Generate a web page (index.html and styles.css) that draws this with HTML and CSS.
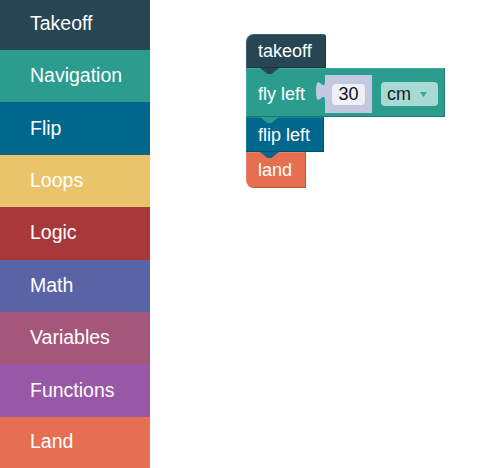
FILE: index.html
```html
<!DOCTYPE html>
<html>
<head>
<meta charset="utf-8">
<link rel="stylesheet" href="styles.css">
</head>
<body>
<div class="app">
  <nav class="toolbox">
    <div class="cat cat-first c-takeoff">Takeoff</div>
    <div class="cat c-nav">Navigation</div>
    <div class="cat c-flip">Flip</div>
    <div class="cat c-loops">Loops</div>
    <div class="cat c-logic">Logic</div>
    <div class="cat c-math">Math</div>
    <div class="cat c-vars">Variables</div>
    <div class="cat c-funcs">Functions</div>
    <div class="cat c-land">Land</div>
  </nav>
  <main class="workspace">
    <div class="stack">
      <div class="block b-takeoff hat">
        <span class="label">takeoff</span>
        <span class="tab"></span>
      </div>
      <div class="block b-fly">
        <span class="label">fly left</span>
        <div class="slot">
          <svg class="slot-bg" width="57" height="38" viewBox="0 0 57 38">
            <path d="M10,0 H57 V38 H10 V26 c0,-13.3 -9,10.7 -9,-10 s9,3.3 9,-10 Z" fill="#c4c7e0"/>
          </svg>
          <span class="num">30</span>
        </div>
        <div class="dropdown">
          <span class="dd-text">cm</span>
          <svg class="dd-arrow" width="7" height="5" viewBox="0 0 7 5"><path d="M0,0 H7 L3.5,5 Z" fill="#3aa597"/></svg>
        </div>
        <span class="tab"></span>
      </div>
      <div class="block b-flip">
        <span class="label">flip left</span>
        <span class="tab"></span>
      </div>
      <div class="block b-land foot">
        <span class="label">land</span>
      </div>
    </div>
  </main>
</div>
</body>
</html>
```

FILE: styles.css
```css
html, body {
  margin: 0;
  padding: 0;
  background: #ffffff;
}

body {
  font-family: "Liberation Sans", Arial, sans-serif;
  width: 483px;
  height: 468px;
  overflow: hidden;
}

.app {
  display: flex;
  height: 468px;
}

.toolbox {
  width: 150px;
  flex: none;
  display: flex;
  flex-direction: column;
}

.cat {
  height: 52.4px;
  flex: none;
  box-sizing: border-box;
  padding: 0 0 1px 30px;
  display: flex;
  align-items: center;
  color: #ffffff;
  font-size: 19.5px;
}

.cat-first {
  height: 50px;
  padding-bottom: 4px;
}

.c-takeoff { background: #264653; }
.c-nav { background: #2a9d8f; }
.c-flip { background: #00688c; }
.c-loops { background: #e9c46a; }
.c-logic { background: #a8393a; }
.c-math { background: #5a63a6; }
.c-vars { background: #a5577a; }
.c-funcs { background: #9858a6; }
.c-land { background: #e76f51; flex: 1; }

.workspace {
  flex: 1;
  padding: 34px 0 0 96px;
}

.stack {
  display: flex;
  flex-direction: column;
  align-items: flex-start;
}

.block {
  position: relative;
  display: flex;
  align-items: center;
  box-sizing: border-box;
  padding: 0 14px 0 12px;
  color: #ffffff;
  font-size: 18px;
  box-shadow: inset -1px -1px 0 rgba(0, 0, 0, 0.22), inset 1px 1px 0 rgba(255, 255, 255, 0.12);
}

.label {
  white-space: nowrap;
}

.tab {
  position: absolute;
  left: 14px;
  top: 100%;
  width: 19px;
  height: 6px;
  background: inherit;
  clip-path: polygon(0 0, 100% 0, 60% 100%, 40% 100%);
  z-index: 2;
}

.hat {
  border-top-left-radius: 8px;
  border-top-right-radius: 3px;
}

.foot {
  border-bottom-left-radius: 8px;
}

.b-takeoff {
  background: #264653;
  height: 34px;
  padding-top: 1px;
}

.b-fly {
  background: #2a9d8f;
  height: 49px;
  padding-top: 3px;
  padding-right: 7px;
}

.b-flip {
  background: #00688c;
  height: 35px;
  padding-top: 2px;
}

.b-land {
  background: #e76f51;
  height: 36px;
  padding-top: 1px;
}

.slot {
  position: relative;
  width: 57px;
  height: 38px;
  margin-left: 10px;
  box-sizing: border-box;
  padding-left: 17px;
  display: flex;
  align-items: center;
  flex: none;
}

.slot-bg {
  position: absolute;
  left: 0;
  top: 0;
}

.num {
  position: relative;
  width: 33px;
  height: 21px;
  border-radius: 4px;
  background: #eff0f6;
  color: #111111;
  display: flex;
  align-items: center;
  justify-content: center;
  font-size: 18px;
  margin-top: 1px;
}

.dropdown {
  margin-left: 9px;
  width: 57px;
  height: 24px;
  border-radius: 4px;
  background: #a6dad3;
  display: flex;
  align-items: center;
  box-sizing: border-box;
  padding: 0 11px 0 6px;
  flex: none;
}

.dd-text {
  color: #1c1c1c;
  font-size: 18px;
}

.dd-arrow {
  margin-left: auto;
}
```
